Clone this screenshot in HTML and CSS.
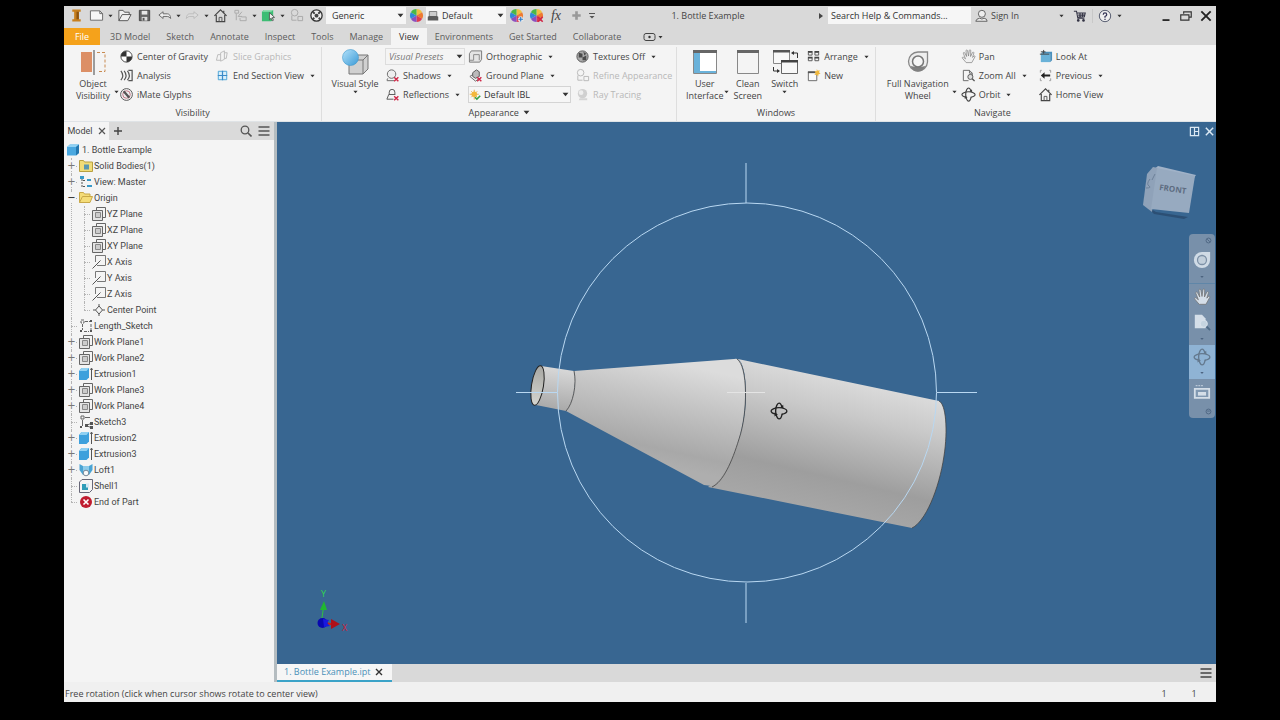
FILE: index.html
```html
<!DOCTYPE html>
<html lang="en">
<head>
<meta charset="utf-8">
<title>1. Bottle Example</title>
<link rel="stylesheet" href="styles.css">
</head>
<body>
<svg class="defs" aria-hidden="true">
  <defs>
    <linearGradient id="ball" x1="0" y1="0" x2="1" y2="1"><stop offset="0" stop-color="#b4e2fa"/><stop offset="1" stop-color="#3b9ad6"/></linearGradient>
    <symbol id="caret" viewBox="0 0 6 4"><path d="M0.5 0.5h5L3 3.5z" fill="currentColor"/></symbol>
    <symbol id="hue" viewBox="0 0 16 16">
      <path d="M8 8V1a7 7 0 0 1 6 3.500z" fill="#f0c040"/><path d="M8 8l6-3.500a7 7 0 0 1 0 7z" fill="#ee7a30"/><path d="M8 8l6 3.500A7 7 0 0 1 8 15z" fill="#e03a50"/><path d="M8 8v7a7 7 0 0 1-6-3.500z" fill="#8a50c0"/><path d="M8 8l-6 3.500a7 7 0 0 1 0-7z" fill="#3088d8"/><path d="M8 8L2 4.500A7 7 0 0 1 8 1z" fill="#48b848"/>
    </symbol>
    <symbol id="plane" viewBox="0 0 14 14"><path d="M4.500 3.500v-3h9v10h-3" fill="none" stroke="#666"/><path d="M.5 3.500h10v10H.5z" fill="#e4e4e4" stroke="#666"/><path d="M3.500 5.500h5v5h-5z" fill="#ccc" stroke="#888"/></symbol>
    <symbol id="axis" viewBox="0 0 14 14"><path d="M3.500 7V.5h10v10H5" fill="none" stroke="#777"/><path d="M.5 13.500l8-8" stroke="#555"/></symbol>
    <symbol id="extrude" viewBox="0 0 14 14"><path d="M0 4l2.500-3H10v9.500L7.500 13H0z" fill="#3da0dc"/><path d="M0 4l2.500-3H10L7.500 4z" fill="#8fd0f2"/><path d="M12.500 13V2M11.500 3l1-2 1 2" stroke="#555" fill="none"/></symbol>
    <symbol id="sketch" viewBox="0 0 14 14"><path d="M2 1h3v3H2zM3.500 5v6M6 2.500h5M12 5v6M5 12.500h5" fill="none" stroke="#666" stroke-dasharray="3 1"/><path d="M1 11h2v2H1zM11 11h2v2h-2zM11 1h2v2h-2z" fill="#555"/></symbol>
    <symbol id="orbit" viewBox="0 0 16 16"><g fill="none" stroke="currentColor" stroke-width="1.200"><path d="M5.500 10.800C2.500 10.300 1 9.200 1 8s3-3 7-3 7 1.700 7 3-2 2.500-4.500 2.900"/><path d="M10.800 10.500C10.300 13.500 9.200 15 8 15s-3-3-3-7 1.700-7 3-7 2.200 1.700 2.700 4"/></g><path d="M4 9.300l3 1.700-3 1.800zM9 4.800l3 .7-.3-3z" fill="currentColor"/></symbol>
    <symbol id="home" viewBox="0 0 16 16"><path d="M1.500 8.500L8 2l6.500 6.500M3.500 7.500v7h9v-7M11.500 3v2.500" fill="none" stroke="#444" stroke-width="1.200"/><path d="M6.500 14.500V10h3v4.500" fill="none" stroke="#555"/></symbol>
    <symbol id="hand" viewBox="0 0 16 16"><path d="M5.500 14.500L1.500 9.800C1 8.700 2.200 8.200 3 9l1.800 1.500L2.500 4.600c-.2-1 1-1.400 1.500-.5L6 8 5.300 2c0-1.200 1.400-1.300 1.700-.2L8 7.500l.8-6c.3-1 1.600-.8 1.600.3L10.200 8l2-4.300c.6-.9 1.800-.3 1.500.6L12.300 9l1.500-1.500c.8-.5 1.500.2 1 1L11.500 14.500z" fill="currentColor" stroke="#777" stroke-width=".7"/></symbol>
    <symbol id="cross" viewBox="0 0 8 8"><path d="M1 1l6 6M7 1L1 7" stroke="#d02848" stroke-width="2"/></symbol>
    <symbol id="rings" viewBox="0 0 16 16"><circle cx="6" cy="5" r="3.500" fill="none" stroke="currentColor"/><path d="M3 8v5h5M9.500 9h5v4.500h-5z" fill="none" stroke="currentColor"/></symbol>
  </defs>
</svg>

<div class="app">
  <header class="titlebar">
    <div class="quick">
      <button aria-label="Application menu"><svg viewBox="0 0 16 16"><path d="M3.500 1.500h9v2.500h-2v8h2v2.500h-9V12h2V4h-2z" fill="#c8801f"/><path d="M8 4h2.500v8H8z" fill="#8d5410"/></svg></button>
      <button aria-label="New"><svg viewBox="0 0 16 16"><path d="M1.500 3h10l3 3v7h-13z" fill="#f6f6f6" stroke="#666"/><path d="M11.500 3v3h3" fill="none" stroke="#666"/></svg></button>
      <button class="drop" aria-label="New options"><svg class="caret"><use href="#caret"/></svg></button>
      <button aria-label="Open"><svg viewBox="0 0 16 16"><path d="M2 13.500v-11h4.500l1.500 2h5V7M2 13.500L5.500 7H15l-3.500 6.500z" fill="#f0f0f0" stroke="#555"/></svg></button>
      <button aria-label="Save"><svg viewBox="0 0 16 16"><path d="M2.500 2.500h11v11h-11z" fill="#666" stroke="#444"/><path d="M5 3h6v4H5z" fill="#e8e8e8"/><path d="M5 9.500h6v4H5z" fill="#ddd"/><path d="M6 10.500h2v3H6z" fill="#555"/></svg></button>
      <button aria-label="Undo"><svg viewBox="0 0 16 16"><path d="M2 7.500L6.500 4v2.200H11q3.500.3 3.500 5Q13 9 11 9H6.500v2.200z" fill="#eee" stroke="#666"/></svg></button>
      <button class="drop" aria-label="Undo history"><svg class="caret"><use href="#caret"/></svg></button>
      <button aria-label="Redo"><svg viewBox="0 0 16 16"><path d="M14 7.500L9.500 4v2.200H5q-3.500.3-3.500 5Q3 9 5 9h4.500v2.200z" fill="#ddd" stroke="#bbb"/></svg></button>
      <button class="drop" aria-label="Redo history"><svg class="caret"><use href="#caret"/></svg></button>
      <button aria-label="Home"><svg viewBox="0 0 16 16"><use href="#home"/></svg></button>
      <button aria-label="Return"><svg viewBox="0 0 16 16" fill="none" stroke="#aaa"><path d="M2 2.500h4v3H2zM3.500 6v7M9.500 4L5.500 9h4M9 9.500h5v4H7.500v-3"/></svg></button>
      <button class="drop" aria-label="Return options"><svg class="caret"><use href="#caret"/></svg></button>
      <button aria-label="Select"><svg viewBox="0 0 16 16"><path d="M1 4l2-2h10v10l-2 2H1z" fill="#3dbd74"/><path d="M1 4l2-2h10l-2 2z" fill="#8fdcae"/><path d="M9 5l5.500 5-2.500.3 1.200 2.800-1.200.5-1.200-2.800L9 12.500z" fill="#eee" stroke="#444" stroke-width=".8"/></svg></button>
      <button class="drop" aria-label="Selection options"><svg class="caret"><use href="#caret"/></svg></button>
      <button class="off" aria-label="Update"><svg viewBox="0 0 16 16"><use href="#rings"/></svg></button>
      <button aria-label="Appearance wheel"><svg viewBox="0 0 16 16"><circle cx="8" cy="8" r="6" fill="#eee" stroke="#333" stroke-width="1.400"/><path d="M4 4l8 8M12 4l-8 8" stroke="#444" stroke-width="2" stroke-dasharray="3 1.500"/><circle cx="8" cy="8" r="2" fill="#444"/></svg></button>
      <label class="pick pick-top"><select aria-label="Material"><option>Generic</option></select><svg class="caret big"><use href="#caret"/></svg></label>
      <button aria-label="Appearance"><svg viewBox="0 0 16 16"><use href="#hue"/></svg></button>
      <label class="pick pick-top with-icon"><svg class="pick-icon" viewBox="0 0 16 16"><path d="M3 2h10v8H3z" fill="#ccc" stroke="#666"/><path d="M1 9l2-1h10l2 1v5H1z" fill="#5c5c5c"/></svg><select aria-label="Appearance override"><option>Default</option></select><svg class="caret big"><use href="#caret"/></svg></label>
      <button aria-label="Adjust"><svg viewBox="0 0 16 16"><use href="#hue"/><path d="M12.500 9v6M9.500 12h6" stroke="#eee" stroke-width="3"/><path d="M12.500 9.500v5M10 12h5" stroke="#2a7ac8" stroke-width="1.200"/></svg></button>
      <button aria-label="Clear overrides"><svg viewBox="0 0 16 16"><use href="#hue"/><use href="#cross" x="8.500" y="8.500" width="7" height="7"/></svg></button>
      <button class="fx" aria-label="Parameters">fx</button>
      <button class="off" aria-label="Add"><svg viewBox="0 0 16 16"><path d="M8 3.500v9M3.500 8h9" stroke="#999" stroke-width="2.800"/></svg></button>
      <button class="drop custom" aria-label="Customize"><svg viewBox="0 0 8 8"><path d="M1 1.500h6" stroke="#555"/><path d="M1.500 4h5L4 6.500z" fill="#555"/></svg></button>
    </div>
    <h1 class="title">1. Bottle Example</h1>
    <div class="account">
      <svg class="play" viewBox="0 0 6 8"><path d="M1 1l4 3-4 3z" fill="#444"/></svg>
      <input type="text" aria-label="Search" placeholder="Search Help &amp; Commands...">
      <button class="sign"><svg viewBox="0 0 16 16"><path d="M2 14q.5-3 4.500-3.500l2.500 1 2.500-1Q15 11 15 14z" fill="#eee" stroke="#555"/><circle cx="9" cy="5.500" r="4" fill="#eee" stroke="#555"/></svg><span>Sign In</span><svg class="caret"><use href="#caret"/></svg></button>
      <button class="cart" aria-label="Store"><svg viewBox="0 0 16 16"><path d="M1 2.500h3l1.500 8H13M4 4.500h10l-1 4.500-8 .5M6 7h8M8 4.500V9M11 4.500V9" fill="none" stroke="#334" stroke-width="1.200"/><circle cx="6" cy="13" r="1.500" fill="#334"/><circle cx="12" cy="13" r="1.500" fill="#334"/></svg></button>
      <button class="help" aria-label="Help"><svg viewBox="0 0 16 16"><circle cx="8" cy="8" r="6.500" fill="#eee" stroke="#444a60"/><path d="M6 6.500Q6 4.500 8 4.500t2 2Q10 7.500 8 8.500V10M8 11v1.500" fill="none" stroke="#335" stroke-width="1.400"/></svg><svg class="caret"><use href="#caret"/></svg></button>
      <div class="window-buttons">
        <button aria-label="Minimize"><svg viewBox="0 0 12 12"><path d="M3 9.500h6" stroke="#222" stroke-width="1.500"/></svg></button>
        <button aria-label="Restore"><svg viewBox="0 0 12 12"><path d="M4 4V2.500h6.500v4.500H9M1.500 5h7v4.500h-7z" fill="none" stroke="#333"/></svg></button>
        <button aria-label="Close"><svg viewBox="0 0 12 12"><path d="M2 2l8 8M10 2l-8 8" stroke="#222" stroke-width="1.600"/></svg></button>
      </div>
    </div>
  </header>

  <nav class="tabs">
    <button class="file">File</button><button>3D Model</button><button>Sketch</button><button>Annotate</button><button>Inspect</button><button>Tools</button><button>Manage</button><button class="active">View</button><button>Environments</button><button>Get Started</button><button>Collaborate</button>
    <button class="show" aria-label="Ribbon display"><svg viewBox="0 0 20 10"><rect x="1" y="1.500" width="11" height="7" rx="2" fill="none" stroke="#444"/><circle cx="6.500" cy="5" r="1.200" fill="#333"/><path d="M15.500 4h4l-2 2.500z" fill="#333"/></svg></button>
  </nav>

  <div class="ribbon">
    <section class="panel">
      <div class="tools">
        <button class="large object"><svg viewBox="0 0 28 28"><path d="M2 4h11v20H2z" fill="#dc8f66"/><path d="M15 2v25" stroke="#444"/><path d="M18 4.500h8v19h-8" fill="none" stroke="#c88a50" stroke-dasharray="3 2"/></svg><span>Object<br>Visibility</span><svg class="caret side"><use href="#caret"/></svg></button>
        <div class="column first">
          <button class="tool"><svg viewBox="0 0 16 16"><circle cx="8" cy="8" r="6" fill="#fff" stroke="#444"/><path d="M8 8V2a6 6 0 0 0-6 6zM8 8v6a6 6 0 0 0 6-6z" fill="#333"/></svg>Center of Gravity</button>
          <button class="tool"><svg viewBox="0 0 16 16" fill="none" stroke="#555" stroke-width="1.300"><path d="M2 3q4 5 0 10M5.500 3q4 5 0 10M9 3q4 5 0 10M10 2.500h4v11h-4" /></svg>Analysis</button>
          <button class="tool"><svg viewBox="0 0 16 16"><circle cx="8" cy="8" r="6.300" fill="#eee" stroke="#555"/><circle cx="8" cy="8" r="4" fill="none" stroke="#c07080"/><path d="M5 4.500l6 7" stroke="#555" stroke-width="2.400"/></svg>iMate Glyphs</button>
        </div>
        <div class="column">
          <button class="tool" disabled><svg viewBox="0 0 16 16" fill="none" stroke="#bbb"><path d="M6 6H3L1.500 12H6M6 4l4-2v9l-4 2zM10 4h3l-1 6h-2"/></svg>Slice Graphics</button>
          <button class="tool"><svg viewBox="0 0 16 16"><path d="M3.500 3.500h9v9h-9z" fill="#d8effa" stroke="#4aa4d8"/><path d="M8 3v10M3 8h10" stroke="#3a8ac8" stroke-width="1.300"/></svg>End Section View<svg class="caret"><use href="#caret"/></svg></button>
        </div>
      </div>
      <h2>Visibility</h2>
    </section>

    <section class="panel">
      <div class="tools">
        <button class="large style"><svg viewBox="0 0 28 28"><path d="M8 12l5-5h14v14l-5 5H8z" fill="#d0d0d0" stroke="#777"/><path d="M8 12h14v14M22 12l5-5" fill="none" stroke="#777"/><circle cx="9.500" cy="9.500" r="8" fill="url(#ball)" stroke="#4098cc" stroke-width=".6"/></svg><span>Visual Style</span><svg class="caret"><use href="#caret"/></svg></button>
        <div class="column presets">
          <label class="pick muted"><select aria-label="Visual presets"><option>Visual Presets</option></select><svg class="caret big"><use href="#caret"/></svg></label>
          <button class="tool"><svg viewBox="0 0 16 16"><circle cx="7" cy="6.500" r="4.500" fill="#eee" stroke="#666"/><path d="M2 13.500h8M3 11l-1 2" stroke="#666"/><use href="#cross" x="9" y="9" width="6" height="6"/></svg>Shadows<svg class="caret"><use href="#caret"/></svg></button>
          <button class="tool"><svg viewBox="0 0 16 16"><path d="M4.500 8V5.500a3 3 0 0 1 6 0V8M4 8h7M4 8l-2 5h7" fill="none" stroke="#555"/><use href="#cross" x="9" y="9" width="6" height="6"/></svg>Reflections<svg class="caret"><use href="#caret"/></svg></button>
        </div>
        <div class="column lighting">
          <button class="tool"><svg viewBox="0 0 16 16"><path d="M1.500 14V5l2-3h11v9l-2 3z" fill="#e4e4e4" stroke="#777"/><path d="M6 6h6v6M6 6v6H2" fill="none" stroke="#888"/></svg>Orthographic<svg class="caret"><use href="#caret"/></svg></button>
          <button class="tool"><svg viewBox="0 0 16 16"><path d="M2 9l6 5 3-2M2 9l3-2" fill="none" stroke="#666"/><path d="M5 5l4-3 3 2v5l-4 2-3-2z" fill="#bbb" stroke="#555"/><use href="#cross" x="9" y="9" width="6" height="6"/></svg>Ground Plane<svg class="caret"><use href="#caret"/></svg></button>
          <label class="pick with-icon"><svg class="pick-icon" viewBox="0 0 16 16"><path d="M7 1v13M1 7h12M3 3l8 8M11 3l-8 8" stroke="#e8b050" stroke-width="1.300"/><circle cx="7" cy="7" r="3.700" fill="#f4b83c"/><path d="M8 11l2.500 2.500L15 9" fill="none" stroke="#3aa048" stroke-width="2"/></svg><select aria-label="Lighting style"><option>Default IBL</option></select><svg class="caret big"><use href="#caret"/></svg></label>
        </div>
        <div class="column">
          <button class="tool"><svg viewBox="0 0 16 16"><circle cx="8" cy="8" r="6" fill="#aaa" stroke="#555"/><path d="M4 4l4 1v4L4 9zM8 9l4-2v5H8zM9 3l3 2-2 2" fill="#4a4a4a"/></svg>Textures Off<svg class="caret"><use href="#caret"/></svg></button>
          <button class="tool" disabled><svg viewBox="0 0 16 16"><use href="#rings"/></svg>Refine Appearance</button>
          <button class="tool" disabled><svg viewBox="0 0 16 16"><path d="M5 12h8v2H4z" fill="#d5d5d5"/><circle cx="8" cy="7" r="5" fill="#d0d0d0"/><circle cx="6.500" cy="6" r="2.500" fill="#eee"/></svg>Ray Tracing</button>
        </div>
      </div>
      <h2>Appearance <svg class="caret big"><use href="#caret"/></svg></h2>
    </section>

    <section class="panel">
      <div class="tools">
        <button class="large interface"><svg viewBox="0 0 28 28"><path d="M2.500 3.500h23v22h-23z" fill="#fff" stroke="#888"/><path d="M2 2h24v3H2z" fill="#666"/><path d="M3 5h6v20H3zM3 23h22v2H3z" fill="#6ab2da"/></svg><span>User<br>Interface</span><svg class="caret side"><use href="#caret"/></svg></button>
        <button class="large"><svg viewBox="0 0 28 28"><path d="M3.500 3.500h21v22h-21z" fill="#f4f4f4" stroke="#888"/><path d="M3 2h22v3H3z" fill="#666"/></svg><span>Clean<br>Screen</span></button>
        <button class="large"><svg viewBox="0 0 28 28"><path d="M2.500 3.500h16v12h-16z" fill="#f8f8f8" stroke="#888"/><path d="M2 2h17v2.500H2z" fill="#555"/><path d="M10.500 13.500h16v12h-16z" fill="#f8f8f8" stroke="#666"/><path d="M10 12h17v2.500H10z" fill="#444"/><path d="M26.500 10V5H22M2.500 19v4H8" fill="none" stroke="#333"/><path d="M20 5l3-2v4zM9 23l-3-2v4z" fill="#333"/></svg><span>Switch</span><svg class="caret"><use href="#caret"/></svg></button>
        <div class="column windows">
          <button class="tool"><svg viewBox="0 0 16 16"><path d="M2.500 3.500h4v3h-4zM9.500 3.500h4v3h-4zM2.500 9.500h4v3h-4zM9.500 9.500h4v3h-4z" fill="none" stroke="#555"/><path d="M2 3h5M9 3h5M2 9h5M9 9h5" stroke="#444" stroke-width="1.500"/></svg>Arrange<svg class="caret"><use href="#caret"/></svg></button>
          <button class="tool"><svg viewBox="0 0 16 16"><path d="M2.500 4.500h9v9h-9z" fill="#fafafa" stroke="#666"/><path d="M2 3.500h8v2H2z" fill="#555"/><path d="M11.500 1l1 2 2.200-.7-.8 2.200 1.600 1.500-2.200.7-.3 2.300-1.500-1.800-2.500.3 1.200-2.200-1-2 2.200.2z" fill="#f0b83c"/></svg>New</button>
        </div>
      </div>
      <h2>Windows</h2>
    </section>

    <section class="panel">
      <div class="tools">
        <button class="large wheel"><svg viewBox="0 0 28 28"><path d="M14 4h9.500v10A9.500 9.500 0 1 1 14 4z" fill="#eee" stroke="#888" stroke-width="1.300"/><path d="M6.500 18q4 1 7.500 1t7.500-1q-2 5.500-7.500 5.500T6.500 18z" fill="#808080"/><circle cx="14" cy="13.500" r="5.500" fill="#f6f6f6" stroke="#777" stroke-width="1.500"/></svg><span>Full Navigation<br>Wheel</span><svg class="caret side"><use href="#caret"/></svg></button>
        <div class="column pan">
          <button class="tool"><svg class="pale" viewBox="0 0 16 16"><use href="#hand"/></svg>Pan</button>
          <button class="tool"><svg viewBox="0 0 16 16"><path d="M8 13.500H2.500v-11H9l3 3V8M9 2.500v3h3" fill="none" stroke="#666"/><circle cx="10" cy="9.500" r="2.700" fill="#ddd" stroke="#555"/><path d="M12 11.500l2.500 2.500" stroke="#555" stroke-width="1.500"/></svg>Zoom All<svg class="caret"><use href="#caret"/></svg></button>
          <button class="tool"><svg viewBox="0 0 16 16"><use href="#orbit"/></svg>Orbit<svg class="caret"><use href="#caret"/></svg></button>
        </div>
        <div class="column">
          <button class="tool"><svg viewBox="0 0 16 16"><path d="M3 5h10v9H3z" fill="#6ab2d8"/><path d="M3 5l2-2h10v9l-2 2V5z" fill="#4a90bc"/><path d="M2 5.500h10M3 3h5M6 1v4" stroke="#444"/></svg>Look At</button>
          <button class="tool"><svg viewBox="0 0 16 16"><path d="M4 2.500H2.500V5M12 2.500h1.500V5M4 13.500H2.500V11M12 13.500h1.500V11" fill="none" stroke="#999"/><path d="M3 8l4-3.500V7h6v2H7v2.500z" fill="#222"/></svg>Previous<svg class="caret"><use href="#caret"/></svg></button>
          <button class="tool"><svg viewBox="0 0 16 16"><use href="#home"/></svg>Home View</button>
        </div>
      </div>
      <h2>Navigate</h2>
    </section>
  </div>

  <main class="workspace">
    <aside class="browser">
      <div class="browser-head">
        <button class="model">Model <svg viewBox="0 0 8 8"><path d="M1 1l6 6M7 1L1 7" stroke="#555" stroke-width="1.200"/></svg></button>
        <button aria-label="Add tab"><svg viewBox="0 0 12 12"><path d="M6 2v8M2 6h8" stroke="#444" stroke-width="1.400"/></svg></button>
        <span class="spacer"></span>
        <button aria-label="Find"><svg viewBox="0 0 12 12"><circle cx="5" cy="5" r="3.800" fill="none" stroke="#555" stroke-width="1.300"/><path d="M8 8l3.500 3.500" stroke="#555" stroke-width="1.600"/></svg></button>
        <button aria-label="Browser menu"><svg viewBox="0 0 12 12"><path d="M.5 2h11M.5 6h11M.5 10h11" stroke="#555" stroke-width="1.400"/></svg></button>
      </div>
      <div class="tree">
        <div class="node root"><svg viewBox="0 0 14 14"><path d="M1 4l3-2.500h9V10l-3 2.500H1z" fill="#4aa8e0"/><path d="M1 4l3-2.500h9L10 4z" fill="#90d2f4"/><path d="M10 4l3-2.500V10l-3 2.500z" fill="#2378b0"/></svg>1. Bottle Example</div>
        <ul>
          <li><div class="node"><button class="toggle" aria-label="Expand">+</button><svg viewBox="0 0 14 14"><path d="M.5 12.500v-11h4l1 1.500h8v9.500z" fill="#f0dc78" stroke="#b8a040"/><path d="M5 5.500h5v5H5z" fill="#5a98b0"/></svg>Solid Bodies(1)</div></li>
          <li><div class="node"><button class="toggle" aria-label="Expand">+</button><svg viewBox="0 0 14 14"><path d="M1 1h4v3H1zM8 4h4v2H8zM8 10h5v2H8z" fill="#3a9ac8"/><path d="M3 4v8M4 5.500h3M4 11.500h3" stroke="#555" stroke-dasharray="2 1"/></svg>View: Master</div></li>
          <li><div class="node"><button class="toggle open" aria-label="Collapse">−</button><svg viewBox="0 0 14 14"><path d="M.5 11.500v-10h4l1 1.500h5.500v2M.5 11.500L3.500 5.500H13.500L11 11.500z" fill="#f4dc78" stroke="#c8a848"/></svg>Origin</div>
            <ul>
              <li><div class="node"><svg><use href="#plane"/></svg>YZ Plane</div></li>
              <li><div class="node"><svg><use href="#plane"/></svg>XZ Plane</div></li>
              <li><div class="node"><svg><use href="#plane"/></svg>XY Plane</div></li>
              <li><div class="node"><svg><use href="#axis"/></svg>X Axis</div></li>
              <li><div class="node"><svg><use href="#axis"/></svg>Y Axis</div></li>
              <li><div class="node"><svg><use href="#axis"/></svg>Z Axis</div></li>
              <li><div class="node"><svg viewBox="0 0 14 14"><path d="M7 3l3.500 4L7 11 3.500 7zM7 1v2M7 11v2M1 7h2.500M10.500 7H13" fill="none" stroke="#555"/></svg>Center Point</div></li>
            </ul>
          </li>
          <li><div class="node"><svg><use href="#sketch"/></svg>Length_Sketch</div></li>
          <li><div class="node"><button class="toggle" aria-label="Expand">+</button><svg><use href="#plane"/></svg>Work Plane1</div></li>
          <li><div class="node"><button class="toggle" aria-label="Expand">+</button><svg><use href="#plane"/></svg>Work Plane2</div></li>
          <li><div class="node"><button class="toggle" aria-label="Expand">+</button><svg><use href="#extrude"/></svg>Extrusion1</div></li>
          <li><div class="node"><button class="toggle" aria-label="Expand">+</button><svg><use href="#plane"/></svg>Work Plane3</div></li>
          <li><div class="node"><button class="toggle" aria-label="Expand">+</button><svg><use href="#plane"/></svg>Work Plane4</div></li>
          <li><div class="node"><svg viewBox="0 0 14 14"><path d="M2 1h3v3H2zM3.500 5v6M6 2.500h5M13 8l-6 2.500L13 13" fill="none" stroke="#666"/><path d="M1 11h2v2H1zM11 7h3v3h-3zM11 11h3v3h-3zM6 9h3v3H6z" fill="#555"/></svg>Sketch3</div></li>
          <li><div class="node"><button class="toggle" aria-label="Expand">+</button><svg><use href="#extrude"/></svg>Extrusion2</div></li>
          <li><div class="node"><button class="toggle" aria-label="Expand">+</button><svg><use href="#extrude"/></svg>Extrusion3</div></li>
          <li><div class="node"><button class="toggle" aria-label="Expand">+</button><svg viewBox="0 0 14 14"><path d="M.5 1L4 3h6l3.500-2v6l-3.500 5H4L.5 7z" fill="#4aa4d4"/><path d="M4 3h6v5H4z" fill="#8ccbea"/><circle cx="7" cy="10" r="2.800" fill="#f8f8f8" stroke="#789"/></svg>Loft1</div></li>
          <li><div class="node"><svg viewBox="0 0 14 14"><path d="M.5 13.500V3L3 .5h10.500v10l-3 3z" fill="#f4f4f4" stroke="#667"/><path d="M3 5h6v6H3z" fill="#2d9cb8"/><path d="M7 4.500h3v4H7z" fill="#cfe8f4"/></svg>Shell1</div></li>
          <li><div class="node"><svg viewBox="0 0 14 14"><circle cx="7" cy="7" r="6" fill="#c01c30"/><path d="M4.500 4.500l5 5M9.500 4.500l-5 5" stroke="#fff" stroke-width="1.600"/></svg>End of Part</div></li>
        </ul>
      </div>
    </aside>

    <div class="document">
      <div class="viewport">
        <svg class="scene" viewBox="277 122 939 542" role="img" aria-label="Bottle model">
          <defs>
            <linearGradient id="body" gradientUnits="userSpaceOnUse" x1="845" y1="380" x2="815" y2="508"><stop offset="0" stop-color="#dadada"/><stop offset=".25" stop-color="#c9c9c9"/><stop offset=".75" stop-color="#9e9e9e"/><stop offset="1" stop-color="#a6a6a6"/></linearGradient>
            <linearGradient id="cone" gradientUnits="userSpaceOnUse" x1="670" y1="362" x2="648" y2="462"><stop offset="0" stop-color="#dcdcdc"/><stop offset=".35" stop-color="#c6c6c6"/><stop offset=".85" stop-color="#a8a8a8"/><stop offset="1" stop-color="#aeaeae"/></linearGradient>
            <linearGradient id="neck" gradientUnits="userSpaceOnUse" x1="558" y1="368" x2="552" y2="410"><stop offset="0" stop-color="#d8d8d8"/><stop offset="1" stop-color="#a8a8a8"/></linearGradient>
            <linearGradient id="mouth" x1="0" y1="0" x2="0" y2="1"><stop offset="0" stop-color="#a6a6a2"/><stop offset="1" stop-color="#d6d6d0"/></linearGradient>
          </defs>
          <path d="M738 359L939 401C946 404 948 430 944 456 939 490 925 522 912 528L708 487C728 472 746 435 746 395 746 375 743 362 738 359z" fill="url(#body)"/>
          <path d="M574 371L734 359Q738 358 740 361C748 376 747 413 739 439 732 462 723 479 712 486L704 485 566 411C574 400 577 380 574 371z" fill="url(#cone)"/>
          <path d="M541 366L574 371C577 382 573 404 566 411L536 405z" fill="url(#neck)"/>
          <ellipse cx="537.500" cy="385.500" rx="6" ry="20" transform="rotate(9 537.500 385.500)" fill="url(#mouth)" stroke="#222"/>
          <g fill="none" stroke="#444" stroke-width=".8"><path d="M574 371C577 384 573 404 566 411M737 359C748 366 748 413 739 439 732 462 723 482 712 487"/><path d="M939 401C946 404 948 430 944 456 939 490 925 522 912 528"/></g>
          <g fill="none" stroke="#b9d8f2"><circle cx="747" cy="392.500" r="189.500"/><path d="M746 163v40M746 583v40M516 392.500h41M937 392.500h40"/><path d="M727 392.500h38" stroke="#e4e4e4"/></g>
          <svg x="770" y="402" width="18" height="18" color="#222"><use href="#orbit"/></svg>
        </svg>
        <div class="doc-buttons">
          <button aria-label="Tile"><svg viewBox="0 0 12 12"><path d="M1.500 1.500h9v9h-9zM6 2v8M6 6h4.500" fill="none" stroke="#dce9f4" stroke-width="1.300"/></svg></button>
          <button aria-label="Close document"><svg viewBox="0 0 12 12"><path d="M2 2l8 8M10 2l-8 8" stroke="#dce9f4" stroke-width="1.600"/></svg></button>
        </div>
        <svg class="cube" viewBox="0 0 64 64">
          <path d="M8 46l10 6 32 5-4 2-30-5z" fill="#2c4f74"/>
          <path d="M15 10l5-4 38 9-2 3z" fill="#a0b2c8"/>
          <path d="M9 14l6-7 5 1-6 44-9-7z" fill="#8fa2b9"/>
          <path d="M19 8l38 8-6 37-38-4z" fill="#97aac0"/>
          <path d="M12 19q-4 5-1 7t-3 2M17 14l-3 6" fill="none" stroke="#6d8199"/>
          <text x="21" y="30" transform="rotate(8 21 30)">FRONT</text>
        </svg>
        <div class="navbar">
          <button class="dot" aria-label="Close bar"><svg viewBox="0 0 8 8"><circle cx="4" cy="4" r="2.800"/><path d="M2.500 2.500l3 3"/></svg></button>
          <button aria-label="Wheel"><svg viewBox="0 0 20 20"><path d="M10 1h9v9a9 9 0 1 1-9-9z" fill="#d0dbe6"/><circle cx="10" cy="10" r="5" fill="#c2cfdb" stroke="#7c90a6" stroke-width="1.400"/></svg></button>
          <svg class="caret"><use href="#caret"/></svg>
          <button class="split" aria-label="Pan"><svg viewBox="0 0 16 16"><use href="#hand"/></svg></button>
          <button aria-label="Zoom"><svg viewBox="0 0 20 20"><path d="M2 2h8l4 4v11H2z" fill="#d4dee8"/><circle cx="12" cy="12" r="4" fill="#c5d4e0" stroke="#dae3ec"/><path d="M15 15l4 4" stroke="#4e6a86" stroke-width="2"/></svg></button>
          <svg class="caret"><use href="#caret"/></svg>
          <div class="current"><button aria-label="Orbit"><svg viewBox="0 0 16 16"><use href="#orbit"/></svg></button><svg class="caret"><use href="#caret"/></svg></div>
          <button aria-label="Look at"><svg viewBox="0 0 20 20"><path d="M2 6.500h16v10H2z" fill="#8199b2" stroke="#d4dee8" stroke-width="2"/><path d="M5.500 10h9v4h-9z" fill="#d4dee8"/><path d="M3 3h8" stroke="#d4dee8" stroke-dasharray="2 1"/></svg></button>
          <button class="dot" aria-label="Bar options"><svg viewBox="0 0 8 8"><circle cx="4" cy="4" r="2.800"/><path d="M2.500 3.500h3"/></svg></button>
        </div>
        <svg class="triad" viewBox="0 0 40 50">
          <path d="M8 38L10.500 20" stroke="#30c040"/><path d="M7 23l4-9 3 9z" fill="#20b830"/><path d="M11 36l10 1.500" stroke="#c02020" stroke-width="2"/><path d="M18 32l9 5-9 5z" fill="#b01018"/><circle cx="9.500" cy="36" r="5" fill="#0808b0"/><path d="M10 32l6 1-2 3 3 3-6 1z" fill="#1818e0"/>
          <text x="8" y="10" fill="#30d850">Y</text><text x="29" y="44" fill="#d02038">X</text>
        </svg>
      </div>
      <div class="doc-tabs">
        <button class="doc-tab">1. Bottle Example.ipt <svg viewBox="0 0 8 8"><path d="M1 1l6 6M7 1L1 7" stroke="#333" stroke-width="1.400"/></svg></button>
        <button class="doc-menu" aria-label="Document list"><svg viewBox="0 0 12 12"><path d="M.5 2h11M.5 6h11M.5 10h11" stroke="#444" stroke-width="1.400"/></svg></button>
      </div>
    </div>
  </main>

  <footer class="status"><span class="message">Free rotation (click when cursor shows rotate to center view)</span><span class="count">1</span><span class="count">1</span></footer>
</div>
</body>
</html>
```

FILE: styles.css
```css
* { box-sizing: border-box; }
body { margin: 0; background: #000; }
h1, h2, ul { margin: 0; padding: 0; font-weight: 400; font-size: 9px; list-style: none; }
button { display: flex; align-items: center; justify-content: center; margin: 0; padding: 0; border: 0; background: none; color: inherit; font: inherit; white-space: nowrap; }
svg { display: block; flex: none; }
.defs { position: absolute; width: 0; height: 0; }

.app {
  display: flex;
  flex-direction: column;
  min-height: 100vh;
  padding: 6px 64px 18px;
  color: #444;
  font: 9px/12px "Open Sans", "Noto Sans", sans-serif;
}
.caret { width: 5px; height: 4px; color: #333; }
.caret.big { width: 7px; height: 5px; }

.titlebar { display: flex; align-items: center; height: 21px; padding-bottom: 2px; background: #d9d9d9; }
.quick { display: flex; align-items: center; padding-left: 2px; }
.quick button { width: 20px; height: 18px; }
.quick button svg { width: 15px; height: 15px; }
.quick .drop { width: 8px; }
.quick .drop svg { width: 5px; height: 4px; }
.quick .custom { width: 12px; }
.quick .custom svg { width: 8px; height: 8px; }
.quick .off { color: #a8a8a8; }
.quick .fx { font: italic 14px/16px "Liberation Serif", serif; }
.title { flex: 1; text-align: center; }

.pick { position: relative; display: flex; align-items: center; height: 17px; border: 1px solid #d4d4d4; background: #f6f6f6; }
.pick select { flex: 1; width: 100%; height: 100%; margin: 0; padding: 0 14px 0 3px; border: 0; background: none; color: #333; font: inherit; appearance: none; }
.pick .caret { position: absolute; right: 1px; }
.pick-icon { width: 12px; height: 12px; }
.pick.muted select { color: #777; font-style: italic; }
.pick-top { width: 80px; border-color: #f6f6f6; }
.pick-top select { padding-left: 5px; }
.with-icon select { padding-left: 3px; }

.account { display: flex; align-items: center; height: 100%; }
.play { width: 6px; height: 8px; margin-right: 4px; }
.account input { width: 143px; height: 17px; padding: 0 3px; border: 0; background: #f6f6f6; color: #333; font: inherit; }
.account input::placeholder { color: #333; opacity: 1; }
.account svg:not(.caret):not(.play) { width: 14px; height: 14px; }
.sign { width: 97px; gap: 3px; justify-content: flex-start; padding-left: 3px; }
.sign .caret { margin-left: auto; margin-right: 4px; }
.cart { width: 24px; }
.help { width: 34px; gap: 5px; border-left: 1px solid #c8c8c8; }
.window-buttons { display: flex; padding-left: 30px; }
.window-buttons button { width: 20px; height: 18px; }
.account .window-buttons svg { width: 12px; height: 12px; }

.tabs { display: flex; height: 18px; padding-top: 1px; background: #d9d9d9; color: #5c5c5c; }
.tabs button { padding: 0 8px; }
.tabs .file { width: 36px; margin-right: 2px; padding: 0; background: #f5a21b; color: #fff; }
.tabs .active { background: #f4f4f4; color: #333; }
.show svg { width: 20px; height: 10px; }
.tabs .show { padding-left: 14px; }

.ribbon { display: flex; height: 77px; padding-top: 2px; background: #f4f4f4; border-bottom: 1px solid #dfe3e6; }
.panel { display: flex; flex-direction: column; border-right: 1px solid #dedede; }
.panel:last-child { border-right: 0; }
.tools { display: flex; flex: 1; padding: 0 4px 0 3px; }
.panel h2 { display: flex; gap: 4px; align-items: center; justify-content: center; height: 17px; }
.column { display: flex; flex-direction: column; }
.column.first { width: 96px; }
.column.presets { width: 80px; margin-right: 3px; }
.column.lighting { width: 103px; margin-right: 4px; }
.column.windows { margin-left: 3px; }
.column.pan { width: 77px; margin-left: 4px; }
.tool { height: 19px; gap: 3px; justify-content: flex-start; }
.tool > svg:not(.caret) { width: 15px; height: 15px; }
.tool .caret { margin: 0 2px 0 3px; }
.tool:disabled { color: #b8b8b8; }
.column .pick { margin: 1px 0; }
.presets .pick { border-color: #ddd; background: #f4f4f4; }
.large { position: relative; flex-direction: column; justify-content: flex-start; min-width: 37px; }
.large > svg:not(.caret) { width: 28px; height: 28px; margin: 1px 0 2px; }
.large .side { position: absolute; right: 0; top: 43px; }
.large.object { width: 52px; }
.large.style { width: 60px; }
.large.interface { width: 49px; }
.large.wheel { width: 78px; }
.pale { color: #f0f0f0; }

.workspace { display: flex; flex: 1; min-height: 500px; }
.browser { flex: none; width: 210px; background: #f4f4f4; font: 9px/16px Roboto, "Liberation Sans", sans-serif; }
.browser-head { display: flex; height: 18px; background: #dadada; padding-right: 1px; }
.browser-head button { width: 18px; }
.browser-head svg { width: 12px; height: 12px; }
.browser-head .model { width: 45px; gap: 5px; background: #f4f4f4; }
.browser-head .model svg { width: 8px; height: 8px; }
.spacer { flex: 1; }
.tree { padding: 2px 0 0 1px; }
.node { display: flex; align-items: center; height: 16px; gap: 1px; }
.node svg { width: 14px; height: 14px; }
.root { padding-left: 1px; gap: 2px; }
.tree > ul { margin-left: 6px; }
.tree li { position: relative; padding-left: 8px; }
.tree li ul { margin-left: 5px; }
.tree li::before { content: ""; position: absolute; left: 0; top: 0; bottom: 0; border-left: 1px dotted #b4b4b4; }
.tree li:last-child::before { bottom: auto; height: 8px; }
.tree li::after { content: ""; position: absolute; left: 0; top: 8px; width: 6px; border-top: 1px dotted #b4b4b4; }
.toggle { position: absolute; z-index: 1; left: -4px; top: 3px; width: 9px; height: 10px; background: #f4f4f4; color: #777; font: 10px/10px "DejaVu Sans", sans-serif; }
.toggle.open { color: #111; }

.document { display: flex; flex: 1; flex-direction: column; min-width: 0; border-left: 3px solid #b4bcc0; }
.viewport { position: relative; flex: 1; overflow: hidden; background: #386691; }
.scene { position: absolute; inset: 0; width: 100%; height: 100%; }
.doc-buttons { position: absolute; top: 4px; right: 1px; display: flex; gap: 4px; }
.doc-buttons svg { width: 11px; height: 11px; }
.cube { position: absolute; top: 38px; right: 14px; width: 64px; height: 64px; }
.cube text { fill: #5d6c80; font: 700 8px "Open Sans", sans-serif; }
.navbar { position: absolute; top: 112px; right: 1px; display: flex; flex-direction: column; align-items: center; width: 26px; height: 184px; border-radius: 4px; background: #7890aa; color: #d4dee8; }
.navbar button { width: 26px; height: 26px; }
.navbar button svg { width: 18px; height: 18px; }
.navbar .caret { height: 4px; width: 4px; margin: 2px 0 4px; color: #4c6380; }
.navbar .split { border-top: 1px solid #5f86a8; }
.navbar .dot { height: 13px; align-self: flex-end; width: 13px; }
.navbar .dot svg { width: 7px; height: 7px; fill: none; stroke: #4c6380; }
.current { width: 26px; height: 34px; display: flex; flex-direction: column; align-items: center; background: #8fb3d4; color: #64798e; }
.triad { position: absolute; left: 36px; bottom: 27px; width: 40px; height: 50px; }
.triad text { font: 9px "Open Sans", sans-serif; }

.doc-tabs { display: flex; justify-content: space-between; height: 18px; background: #d9d9d9; }
.doc-tab { gap: 5px; padding: 0 9px 0 7px; border-bottom: 2px solid #3ba3c8; background: #f6f6f6; color: #4a90b8; }
.doc-tab svg { width: 8px; height: 8px; }
.doc-menu { width: 20px; }
.doc-menu svg { width: 12px; height: 12px; }
.status { display: flex; align-items: center; height: 20px; padding: 3px 7px 0 0; background: #f0f0f0; }
.message { flex: 1; padding-left: 1px; }
.count { width: 30px; text-align: center; }
```
